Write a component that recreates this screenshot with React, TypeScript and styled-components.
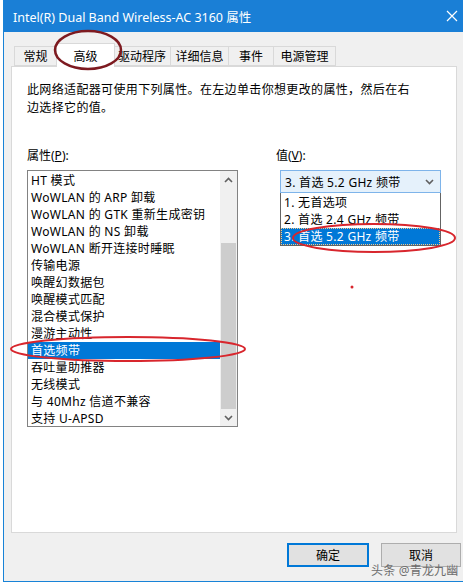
import styled, { createGlobalStyle } from "styled-components";

const GlobalStyle = createGlobalStyle`
  html, body {
    margin: 0;
    padding: 0;
    background: #ffffff;
    overflow: hidden;
  }
  body {
    font-family: "Noto Sans", "Noto Sans CJK SC", sans-serif;
    font-size: 12px;
    color: #000;
  }
`;

const Page = styled.div`
  position: relative;
  width: 463px;
  height: 584px;
  padding-left: 3px;
  box-sizing: border-box;
`;

const Window = styled.div`
  width: 460px;
  height: 582px;
  display: flex;
  flex-direction: column;
  border-left: 1px solid #1883d7;
  border-bottom: 1px solid #1883d7;
  box-sizing: border-box;
  background: #f0f0f0;
`;

const TitleBar = styled.div`
  height: 32px;
  flex-shrink: 0;
  display: flex;
  align-items: center;
  justify-content: space-between;
  padding: 0 0 0 9px;
  background: #1a7fd6;
  color: #fff;
  font-size: 12.5px;
`;

const CloseIcon = styled.svg`
  width: 12px;
  height: 12px;
  margin-right: 5px;
`;

const Body = styled.div`
  flex: 1;
  display: flex;
  flex-direction: column;
  padding: 11px 0 0 7px;
`;

const TabStrip = styled.div`
  display: flex;
  align-items: flex-end;
  height: 23px;
  padding-left: 3px;
  position: relative;
  z-index: 1;
`;

const Tab = styled.div<{ $w: number; $active?: boolean }>`
  width: ${(p) => p.$w}px;
  height: ${(p) => (p.$active ? 24 : 20)}px;
  margin: ${(p) => (p.$active ? "0 -1px -1px -1px" : "0")};
  box-sizing: border-box;
  display: flex;
  align-items: ${(p) => (p.$active ? "flex-start" : "center")};
  padding-top: ${(p) => (p.$active ? "3px" : "0")};
  justify-content: center;
  border: 1px solid #d9d9d9;
  border-bottom: ${(p) => (p.$active ? "none" : "1px solid #d9d9d9")};
  border-left: ${(p) => (p.$active ? "1px solid #d9d9d9" : "none")};
  background: ${(p) => (p.$active ? "#fff" : "#f0f0f0")};
  position: relative;
  z-index: ${(p) => (p.$active ? 2 : 1)};
  &:first-child {
    border-left: 1px solid #d9d9d9;
  }
`;

const Panel = styled.div`
  width: 446px;
  height: 467px;
  box-sizing: border-box;
  border: 1px solid #d9d9d9;
  background: #fff;
  padding: 14px 15px 0 15px;
  display: flex;
  flex-direction: column;
`;

const Description = styled.p`
  margin: 0;
  width: 392px;
  line-height: 18px;
  letter-spacing: 0.35px;
`;

const Columns = styled.div`
  display: flex;
  gap: 38px;
  margin-top: 30px;
`;

const Column = styled.div<{ $w: number }>`
  width: ${(p) => p.$w}px;
  display: flex;
  flex-direction: column;
`;

const FieldLabel = styled.div`
  height: 17px;
  line-height: 17px;
  margin-bottom: 6px;
`;

const ListBox = styled.div`
  height: 257px;
  border: 1px solid #828282;
  box-sizing: border-box;
  display: flex;
  background: #fff;
`;

const ListItems = styled.div`
  flex: 1;
  display: flex;
  flex-direction: column;
  padding-top: 1px;
`;

const ListItem = styled.div<{ $selected?: boolean }>`
  height: 17px;
  line-height: 17px;
  padding-left: 3px;
  white-space: nowrap;
  letter-spacing: 0.3px;
  background: ${(p) => (p.$selected ? "#0078d7" : "transparent")};
  color: ${(p) => (p.$selected ? "#fff" : "#000")};
`;

const ScrollBar = styled.div`
  width: 17px;
  display: flex;
  flex-direction: column;
  background: #f0f0f0;
`;

const ScrollButton = styled.div`
  height: 17px;
  display: flex;
  align-items: center;
  justify-content: center;
`;

const ScrollSpace = styled.div`
  flex: 1;
`;

const ScrollThumb = styled.div`
  height: 166px;
  margin: 0 1px;
  background: #cdcdcd;
`;

const Arrow = styled.svg`
  width: 9px;
  height: 6px;
`;

const Select = styled.div`
  width: 161px;
  margin-left: 4px;
  display: flex;
  flex-direction: column;
`;

const SelectBox = styled.div`
  height: 23px;
  box-sizing: border-box;
  border: 1px solid #7eb4ea;
  background: #e5f1fb;
  display: flex;
  align-items: center;
  justify-content: space-between;
  padding: 0 6px 0 4px;
  letter-spacing: 0.3px;
`;

const OptionList = styled.div`
  border: 1px solid #646464;
  border-top: none;
  background: #fff;
  display: flex;
  flex-direction: column;
  padding-top: 1px;
`;

const Option = styled.div<{ $selected?: boolean }>`
  height: 17px;
  line-height: 16px;
  padding-left: 2px;
  box-sizing: border-box;
  letter-spacing: 0.3px;
  background: ${(p) => (p.$selected ? "#0078d7" : "transparent")};
  color: ${(p) => (p.$selected ? "#fff" : "#000")};
  border: 1px dotted ${(p) => (p.$selected ? "#f7c98a" : "transparent")};
`;

const Footer = styled.div`
  flex: 1;
  display: flex;
  justify-content: flex-end;
  align-items: center;
  gap: 12px;
  padding-right: 2px;
`;

const Button = styled.button<{ $primary?: boolean }>`
  width: ${(p) => (p.$primary ? 82 : 80)}px;
  height: 24px;
  box-sizing: border-box;
  font-family: inherit;
  font-size: 12px;
  color: #000;
  background: #e1e1e1;
  border: ${(p) => (p.$primary ? "2px solid #0078d7" : "1px solid #adadad")};
  padding: 0;
  margin-bottom: 5px;
`;

const Watermark = styled.div`
  position: absolute;
  left: 371px;
  top: 561px;
  font-size: 12px;
  color: #6e6e6e;
  letter-spacing: 0.2px;
  pointer-events: none;
  z-index: 6;
`;

const Marks = styled.svg`
  position: absolute;
  left: 0;
  top: 0;
  pointer-events: none;
  z-index: 5;
`;

const properties = [
  "HT 模式",
  "WoWLAN 的 ARP 卸载",
  "WoWLAN 的 GTK 重新生成密钥",
  "WoWLAN 的 NS 卸载",
  "WoWLAN 断开连接时睡眠",
  "传输电源",
  "唤醒幻数据包",
  "唤醒模式匹配",
  "混合模式保护",
  "漫游主动性",
  "首选频带",
  "吞吐量助推器",
  "无线模式",
  "与 40Mhz 信道不兼容",
  "支持 U-APSD",
];

const options = ["1. 无首选项", "2. 首选 2.4 GHz 频带", "3. 首选 5.2 GHz 频带"];

const tabs = [
  { label: "常规", w: 43 },
  { label: "高级", w: 59, active: true },
  { label: "驱动程序", w: 57 },
  { label: "详细信息", w: 58 },
  { label: "事件", w: 45 },
  { label: "电源管理", w: 62 },
];

const Chevron = ({ up }: { up?: boolean }) => (
  <Arrow viewBox="0 0 9 6">
    <path
      d={up ? "M1 5 L4.5 1.5 L8 5" : "M1 1 L4.5 4.5 L8 1"}
      fill="none"
      stroke="#606060"
      strokeWidth="1.6"
    />
  </Arrow>
);

export default function App() {
  return (
    <>
      <GlobalStyle />
      <Page>
        <Window>
          <TitleBar>
            <span>Intel(R) Dual Band Wireless-AC 3160 属性</span>
            <CloseIcon viewBox="0 0 12 12">
              <path d="M1 1 L11 11 M11 1 L1 11" stroke="#fff" strokeWidth="1.2" />
            </CloseIcon>
          </TitleBar>
          <Body>
            <TabStrip>
              {tabs.map((t) => (
                <Tab key={t.label} $w={t.w} $active={t.active}>
                  {t.label}
                </Tab>
              ))}
            </TabStrip>
            <Panel>
              <Description>
                此网络适配器可使用下列属性。在左边单击你想更改的属性，然后在右边选择它的值。
              </Description>
              <Columns>
                <Column $w={216}>
                  <FieldLabel>
                    属性(<u>P</u>):
                  </FieldLabel>
                  <ListBox>
                    <ListItems>
                      {properties.map((p) => (
                        <ListItem key={p} $selected={p === "首选频带"}>
                          {p}
                        </ListItem>
                      ))}
                    </ListItems>
                    <ScrollBar>
                      <ScrollButton>
                        <Chevron up />
                      </ScrollButton>
                      <ScrollSpace />
                      <ScrollThumb />
                      <ScrollButton>
                        <Chevron />
                      </ScrollButton>
                    </ScrollBar>
                  </ListBox>
                </Column>
                <Column $w={165}>
                  <FieldLabel>
                    值(<u>V</u>):
                  </FieldLabel>
                  <Select>
                    <SelectBox>
                      <span>3. 首选 5.2 GHz 频带</span>
                      <Chevron />
                    </SelectBox>
                    <OptionList>
                      {options.map((o, i) => (
                        <Option key={o} $selected={i === 2}>
                          {o}
                        </Option>
                      ))}
                    </OptionList>
                  </Select>
                </Column>
              </Columns>
            </Panel>
            <Footer>
              <Button $primary>确定</Button>
              <Button>取消</Button>
            </Footer>
          </Body>
        </Window>
        <Marks width="463" height="584" viewBox="0 0 463 584">
          <ellipse cx="88" cy="50" rx="33" ry="19" fill="none" stroke="#7d1a20" strokeWidth="2.5" />
          <ellipse cx="128" cy="349" rx="117" ry="12" fill="none" stroke="#d8262d" strokeWidth="2" />
          <ellipse cx="374" cy="238" rx="81" ry="14" fill="none" stroke="#d8262d" strokeWidth="2" />
          <circle cx="352" cy="287" r="1.5" fill="#d8262d" />
        </Marks>
        <Watermark>头条 @青龙九幽</Watermark>
      </Page>
    </>
  );
}
